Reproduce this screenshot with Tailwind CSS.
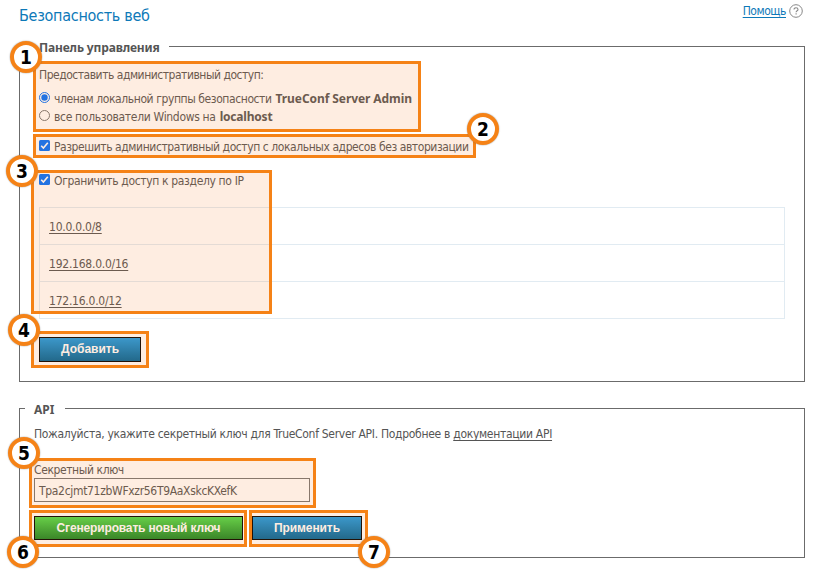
<!DOCTYPE html>
<html lang="ru">
<head>
<meta charset="utf-8">
<title>Безопасность веб</title>
<script src="https://cdn.jsdelivr.net/npm/@tailwindcss/browser@4"></script>
</head>
<body class="bg-white">
<div class="relative h-[573px] w-[815px] overflow-hidden pl-[19px] pr-[10px] font-['DejaVu_Sans_Condensed','DejaVu_Sans',sans-serif] text-[12px] leading-4 text-[#555] whitespace-nowrap">

  <!-- Header -->
  <header class="flex h-[46px] justify-between pr-[2px]">
    <h1 class="pt-[5px] text-[16px] leading-[22px] tracking-[-0.28px] text-[#0d79b8]">Безопасность веб</h1>
    <div class="flex h-[16px] pt-[3px]">
      <a class="mr-[3px] tracking-[-0.45px] text-[#0d79b8] underline underline-offset-2">Помощь</a>
      <svg class="mt-px size-[14px]" viewBox="0 0 14 14" fill="none"><circle cx="7" cy="7" r="6.3" stroke="#888"/><path d="M5 5.6C5 4.4 5.8 3.8 7 3.8s2 .6 2 1.6c0 1.3-1.9 1.3-1.9 2.8M7.1 9.3v1.2" stroke="#888" stroke-width="1.1"/></svg>
    </div>
  </header>

  <!-- Control panel -->
  <section class="flex h-[336px] w-[786px] flex-col border border-[#6b6b6b] px-[19px]">
    <h2 class="-mt-[7px] -ml-[10px] h-4 w-[140px] shrink-0 bg-white pl-[10px] font-['Noto_Sans',sans-serif] font-bold tracking-[-0.15px]">Панель управления</h2>
    <p class="mt-[11px] tracking-[-0.474px]">Предоставить административный доступ:</p>
    <label class="mt-[8px] flex h-[18px]"><svg class="mr-[4px] mt-[1px] size-[11px]" viewBox="0 0 11 11"><circle cx="5.5" cy="5.5" r="5" fill="#fff" stroke="#0071ff"/><circle cx="5.5" cy="5.5" r="3.2" fill="#0071ff"/></svg><span class="tracking-[-0.41px]">членам локальной группы безопасности</span><b class="ml-[4px] font-['Noto_Sans',sans-serif] tracking-[-0.08px]">TrueConf Server Admin</b></label>
    <label class="flex h-[18px]"><svg class="mr-[4px] mt-[1px] size-[11px]" viewBox="0 0 11 11"><circle cx="5.5" cy="5.5" r="5" fill="#fff" stroke="#767676"/></svg><span class="tracking-[-0.315px]">все пользователи Windows на</span><b class="ml-[4px] font-['Noto_Sans',sans-serif] tracking-[-0.2px]">localhost</b></label>
    <label class="mt-[12px] flex"><svg class="mr-[4px] mt-[1px] size-[11px]" viewBox="0 0 11 11"><rect width="11" height="11" rx="1.5" fill="#0071ff"/><path d="M2.2 5.7 4.4 8 8.8 2.8" fill="none" stroke="#fff" stroke-width="1.6"/></svg><span class="tracking-[-0.423px]">Разрешить административный доступ с локальных адресов без авторизации</span></label>
    <label class="mt-[18px] flex"><svg class="mr-[4px] mt-[1px] size-[11px]" viewBox="0 0 11 11"><rect width="11" height="11" rx="1.5" fill="#0071ff"/><path d="M2.2 5.7 4.4 8 8.8 2.8" fill="none" stroke="#fff" stroke-width="1.6"/></svg><span class="tracking-[-0.348px]">Ограничить доступ к разделу по IP</span></label>
    <div class="mt-[18px] w-[746px] divide-y divide-[#e1ebf2] border border-[#e1ebf2] tracking-[-0.24px] underline underline-offset-2">
      <div class="h-[37px] pl-[9px] pt-[11px]">10.0.0.0/8</div>
      <div class="h-[37px] pl-[9px] pt-[11px]">192.168.0.0/16</div>
      <div class="h-[36px] pl-[9px] pt-[11px]">172.16.0.0/12</div>
    </div>
    <button class="mt-[18px] h-[25px] w-[102px] border border-black bg-linear-to-b from-[#1d9ce5] to-[#01669b] pb-px font-['Liberation_Sans',Arial,sans-serif] font-bold text-white">Добавить</button>
  </section>

  <!-- API -->
  <section class="mt-[26px] flex h-[150px] w-[786px] flex-col border border-[#6b6b6b] px-[14px]">
    <h2 class="-mt-[7px] -ml-[9px] h-4 w-[40px] shrink-0 bg-white pl-[9px] font-['Noto_Sans',sans-serif] font-bold">API</h2>
    <p class="mt-[8px] tracking-[-0.3px]">Пожалуйста, укажите секретный ключ для TrueConf Server API. Подробнее в <a class="underline underline-offset-2">документации API</a></p>
    <div class="mt-[20px] tracking-[-0.4px]">Секретный ключ</div>
    <div class="h-[24px] w-[276px] border border-[#767676] pl-[4px] pt-[4px] tracking-[-0.32px]">Tpa2cjmt71zbWFxzr56T9AaXskcKXefK</div>
    <div class="mt-[14px] flex gap-[9px] font-['Liberation_Sans',Arial,sans-serif]">
      <button class="h-[24px] w-[209px] border border-black bg-linear-to-b from-[#4fdc4d] to-[#1c8829] font-bold tracking-[-0.155px] text-white">Сгенерировать новый ключ</button>
      <button class="h-[24px] w-[110px] border border-black bg-linear-to-b from-[#1d9ce5] to-[#01669b] font-bold tracking-[-0.1px] text-white">Применить</button>
    </div>
  </section>

  <!-- Callout frames -->
  <div class="absolute left-[33px] top-[61px] h-[71px] w-[388px] border-3 border-[#f58216] bg-[#f5822b]/14 bg-clip-padding"></div>
  <div class="absolute left-[33px] top-[134px] h-[24px] w-[443px] border-3 border-[#f58216] bg-[#f5822b]/14 bg-clip-padding"></div>
  <div class="absolute left-[31px] top-[170px] h-[144px] w-[241px] border-3 border-[#f58216] bg-[#f5822b]/14 bg-clip-padding"></div>
  <div class="absolute left-[31px] top-[331px] h-[37px] w-[118px] border-3 border-[#f58216] bg-[#f5822b]/14 bg-clip-padding"></div>
  <div class="absolute left-[29px] top-[458px] h-[50px] w-[287px] border-3 border-[#f58216] bg-[#f5822b]/14 bg-clip-padding"></div>
  <div class="absolute left-[29px] top-[510px] h-[37px] w-[218px] border-3 border-[#f58216] bg-[#f5822b]/14 bg-clip-padding"></div>
  <div class="absolute left-[249px] top-[510px] h-[37px] w-[119px] border-3 border-[#f58216] bg-[#f5822b]/14 bg-clip-padding"></div>

  <!-- Numbered badges -->
  <div class="font-['DejaVu_Sans_Condensed','DejaVu_Sans',sans-serif] text-[19px] leading-[24px] font-bold text-black">
    <div class="absolute left-[10px] top-[41px] flex size-8 justify-center rounded-full border-4 border-[#f58216] bg-white shadow-[0_0_1px_0.5px_rgba(90,90,90,0.3)]">1</div>
    <div class="absolute left-[467px] top-[113px] flex size-8 justify-center rounded-full border-4 border-[#f58216] bg-white shadow-[0_0_1px_0.5px_rgba(90,90,90,0.3)]">2</div>
    <div class="absolute left-[6px] top-[155px] flex size-8 justify-center rounded-full border-4 border-[#f58216] bg-white shadow-[0_0_1px_0.5px_rgba(90,90,90,0.3)]">3</div>
    <div class="absolute left-[8px] top-[314px] flex size-8 justify-center rounded-full border-4 border-[#f58216] bg-white shadow-[0_0_1px_0.5px_rgba(90,90,90,0.3)]">4</div>
    <div class="absolute left-[8px] top-[437px] flex size-8 justify-center rounded-full border-4 border-[#f58216] bg-white shadow-[0_0_1px_0.5px_rgba(90,90,90,0.3)]">5</div>
    <div class="absolute left-[7px] top-[536px] flex size-8 justify-center rounded-full border-4 border-[#f58216] bg-white shadow-[0_0_1px_0.5px_rgba(90,90,90,0.3)]">6</div>
    <div class="absolute left-[358px] top-[536px] flex size-8 justify-center rounded-full border-4 border-[#f58216] bg-white shadow-[0_0_1px_0.5px_rgba(90,90,90,0.3)]">7</div>
  </div>
</div>
</body>
</html>
